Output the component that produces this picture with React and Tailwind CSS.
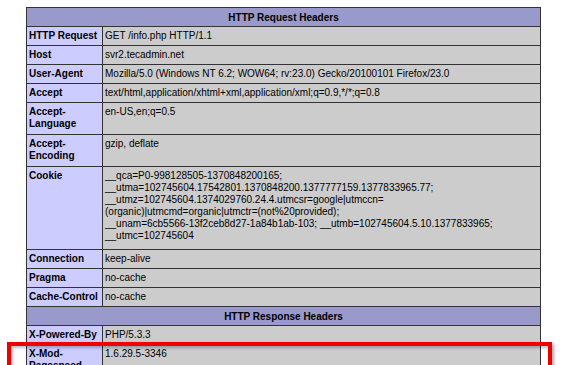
const REQUEST = [
  { k: 'HTTP Request', v: 'GET /info.php HTTP/1.1' },
  { k: 'Host', v: 'svr2.tecadmin.net' },
  { k: 'User-Agent', v: 'Mozilla/5.0 (Windows NT 6.2; WOW64; rv:23.0) Gecko/20100101 Firefox/23.0' },
  { k: 'Accept', v: 'text/html,application/xhtml+xml,application/xml;q=0.9,*/*;q=0.8' },
  { k: ['Accept-', 'Language'], v: 'en-US,en;q=0.5', h: 'h-[32px]' },
  { k: ['Accept-', 'Encoding'], v: 'gzip, deflate', h: 'h-[32px]' },
  {
    k: 'Cookie',
    v: [
      '__qca=P0-998128505-1370848200165;',
      '__utma=102745604.17542801.1370848200.1377777159.1377833965.77;',
      '__utmz=102745604.1374029760.24.4.utmcsr=google|utmccn=',
      '(organic)|utmcmd=organic|utmctr=(not%20provided);',
      '__unam=6cb5566-13f2ceb8d27-1a84b1ab-103; __utmb=102745604.5.10.1377833965;',
      '__utmc=102745604',
    ],
    h: 'h-[83px]',
  },
  { k: 'Connection', v: 'keep-alive' },
  { k: 'Pragma', v: 'no-cache' },
  { k: 'Cache-Control', v: 'no-cache' },
]

const RESPONSE = [
  { k: 'X-Powered-By', v: 'PHP/5.3.3' },
  { k: ['X-Mod-', 'Pagespeed'], v: '1.6.29.5-3346', h: 'h-[32px]' },
]

function Lines({ text }) {
  if (!Array.isArray(text)) return text
  return text.map((t, i) => (
    <span key={i} className="block">{t}</span>
  ))
}

function Row({ k, v, h }) {
  return (
    <tr className={h || 'h-[19px]'}>
      <td className="border border-[#333] bg-[#ccccff] px-[2px] pt-[3px] pb-[2px] align-top font-bold whitespace-nowrap">
        <Lines text={k} />
      </td>
      <td className="border border-[#333] bg-[#cccccc] px-[2px] pt-[3px] pb-[2px] align-top whitespace-nowrap">
        <Lines text={v} />
      </td>
    </tr>
  )
}

function Heading({ children }) {
  return (
    <tr className="h-[19px]">
      <td colSpan={2} className="border border-[#333] bg-[#9999cc] pt-[3px] pb-[2px] text-center font-bold">
        {children}
      </td>
    </tr>
  )
}

export default function App() {
  return (
    <div className="relative h-[365px] w-[570px] overflow-hidden bg-white font-['Liberation_Sans',Arial,sans-serif] text-[10px] leading-[12px] text-black">
      <div className="pl-[26px] pt-[7px]">
        <table className="w-[515px] table-fixed border-collapse border border-[#333]">
          <colgroup>
            <col className="w-[76px]" />
            <col />
          </colgroup>
          <tbody>
            <Heading>HTTP Request Headers</Heading>
            {REQUEST.map(r => <Row key={String(r.k)} {...r} />)}
            <Heading>HTTP Response Headers</Heading>
            {RESPONSE.map(r => <Row key={String(r.k)} {...r} />)}
          </tbody>
        </table>
      </div>

      {/* red highlight annotation */}
      <div className="absolute left-[7px] top-[342px] h-[60px] w-[545px] border-[4px] border-[#ee0000] shadow-[2px_2px_3px_rgba(0,0,0,0.35),inset_2px_2px_3px_rgba(0,0,0,0.25)]" />
    </div>
  )
}
